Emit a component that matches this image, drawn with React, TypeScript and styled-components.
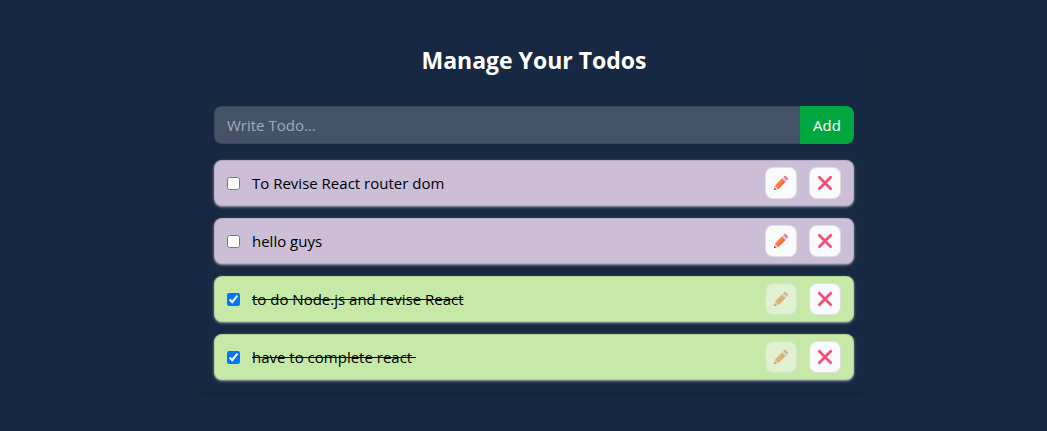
import React, { useState } from "react";
import styled, { createGlobalStyle } from "styled-components";

const GlobalStyle = createGlobalStyle`
  *, *::before, *::after { box-sizing: border-box; }
  body {
    margin: 0;
    background: #172842;
    font-family: "Open Sans", "Noto Sans", sans-serif;
    font-size: 15px;
    line-height: 24px;
  }
`;

const Page = styled.main`
  min-height: 100vh;
  padding: 32px 0 32px 21px;
  background: #172842;
`;

const Panel = styled.section`
  width: 100%;
  max-width: 672px;
  margin: 0 auto;
  padding: 12px 16px;
  border-radius: 8px;
  color: #fff;
  box-shadow: 0 4px 6px -1px rgba(0, 0, 0, 0.06), 0 2px 4px -2px rgba(0, 0, 0, 0.06);
`;

const Title = styled.h1`
  margin: 0 0 30px;
  font-size: 23px;
  line-height: 32px;
  font-weight: 700;
  text-align: center;
`;

const AddForm = styled.form`
  display: flex;
  height: 38px;
  margin-bottom: 16px;
`;

const TodoInput = styled.input`
  flex: 1;
  min-width: 0;
  padding: 0 12px;
  border: 1px solid rgba(0, 0, 0, 0.1);
  border-right-width: 0;
  border-radius: 8px 0 0 8px;
  outline: none;
  background: #455368;
  color: #fff;
  font: inherit;
  &::placeholder { color: #a2a9b3; opacity: 1; }
`;

const AddButton = styled.button`
  width: 54px;
  padding: 0;
  border: 0;
  border-radius: 0 8px 8px 0;
  background: #00a63e;
  color: #fff;
  font: inherit;
`;

const List = styled.ul`
  display: flex;
  flex-direction: column;
  gap: 12px;
  margin: 0;
  padding: 0;
  list-style: none;
`;

const Row = styled.li<{ $done: boolean }>`
  display: flex;
  align-items: center;
  gap: 12px;
  padding: 6px 12px;
  border: 1px solid rgba(0, 0, 0, 0.1);
  border-radius: 8px;
  background: ${(p) => (p.$done ? "#c6e9a7" : "#ccbed7")};
  color: #000;
  box-shadow: 0 1px 3px rgba(255, 255, 255, 0.5), 0 1px 2px -1px rgba(255, 255, 255, 0.5);
`;

const Check = styled.input`
  flex: none;
  width: 13px;
  height: 13px;
  margin: 0;
`;

const TodoText = styled.label<{ $done: boolean }>`
  flex: 1;
  white-space: pre;
  text-decoration: ${(p) => (p.$done ? "line-through" : "none")};
`;

const IconButton = styled.button`
  display: inline-flex;
  align-items: center;
  justify-content: center;
  flex: none;
  width: 32px;
  height: 32px;
  padding: 0;
  border: 1px solid rgba(0, 0, 0, 0.1);
  border-radius: 8px;
  background: #f9fafb;
  &:disabled { opacity: 0.5; }
`;

const PencilIcon = () => (
  <svg width="16" height="16" viewBox="0 0 16 16" aria-hidden="true">
    <defs>
      <linearGradient id="wood" x1="5" y1="6" x2="9" y2="10" gradientUnits="userSpaceOnUse">
        <stop stopColor="#ff9350" />
        <stop offset=".5" stopColor="#fb7a42" />
        <stop offset="1" stopColor="#ef6a3c" />
      </linearGradient>
    </defs>
    <path d="M8.9 3.3 12.6 7 5.4 14 2 10.5Z" fill="url(#wood)" />
    <path d="M2 10.5 5.4 14 1.8 14.9Q.9 15 1.1 14.1Z" fill="#f0b58e" />
    <path d="M1.4 12.9 3 14.6 1.8 14.9Q.9 15 1.1 14.1Z" fill="#5b4149" />
    <path d="M8.9 3.3 10.6 1.7 14.2 5.3 12.6 7Z" fill="#d5c8dc" />
    <path d="m10.6 1.7.5-.5q.8-.7 1.6 0l2 2q.7.8 0 1.6l-.5.5Z" fill="#f2606a" />
  </svg>
);

const CrossIcon = () => (
  <svg width="16" height="16" viewBox="0 0 16 16" aria-hidden="true">
    <path
      d="M2.3 2.3 13.7 13.7M13.7 2.3 2.3 13.7"
      fill="none"
      stroke="#f74c78"
      strokeWidth="2.7"
      strokeLinecap="round"
    />
  </svg>
);

interface Todo {
  id: number;
  text: string;
  done: boolean;
}

const initialTodos: Todo[] = [
  { id: 1, text: "To Revise React router dom", done: false },
  { id: 2, text: "hello guys", done: false },
  { id: 3, text: "to do Node.js and revise React", done: true },
  { id: 4, text: "have to complete react ", done: true },
];

export default function App() {
  const [todos, setTodos] = useState(initialTodos);
  const [draft, setDraft] = useState("");

  const add = (e: React.FormEvent) => {
    e.preventDefault();
    if (!draft.trim()) return;
    setTodos([{ id: Date.now(), text: draft, done: false }, ...todos]);
    setDraft("");
  };
  const toggle = (id: number) =>
    setTodos(todos.map((t) => (t.id === id ? { ...t, done: !t.done } : t)));
  const remove = (id: number) => setTodos(todos.filter((t) => t.id !== id));

  return (
    <>
      <GlobalStyle />
      <Page>
        <Panel>
          <Title>Manage Your Todos</Title>
          <AddForm onSubmit={add}>
            <TodoInput
              type="text"
              aria-label="Write Todo"
              placeholder="Write Todo..."
              value={draft}
              onChange={(e) => setDraft(e.target.value)}
            />
            <AddButton type="submit">Add</AddButton>
          </AddForm>
          <List>
            {todos.map((t) => (
              <Row key={t.id} $done={t.done}>
                <Check
                  id={`todo-${t.id}`}
                  type="checkbox"
                  checked={t.done}
                  onChange={() => toggle(t.id)}
                />
                <TodoText htmlFor={`todo-${t.id}`} $done={t.done}>{t.text}</TodoText>
                <IconButton type="button" aria-label="Edit" disabled={t.done}>
                  <PencilIcon />
                </IconButton>
                <IconButton type="button" aria-label="Delete" onClick={() => remove(t.id)}>
                  <CrossIcon />
                </IconButton>
              </Row>
            ))}
          </List>
        </Panel>
      </Page>
    </>
  );
}
